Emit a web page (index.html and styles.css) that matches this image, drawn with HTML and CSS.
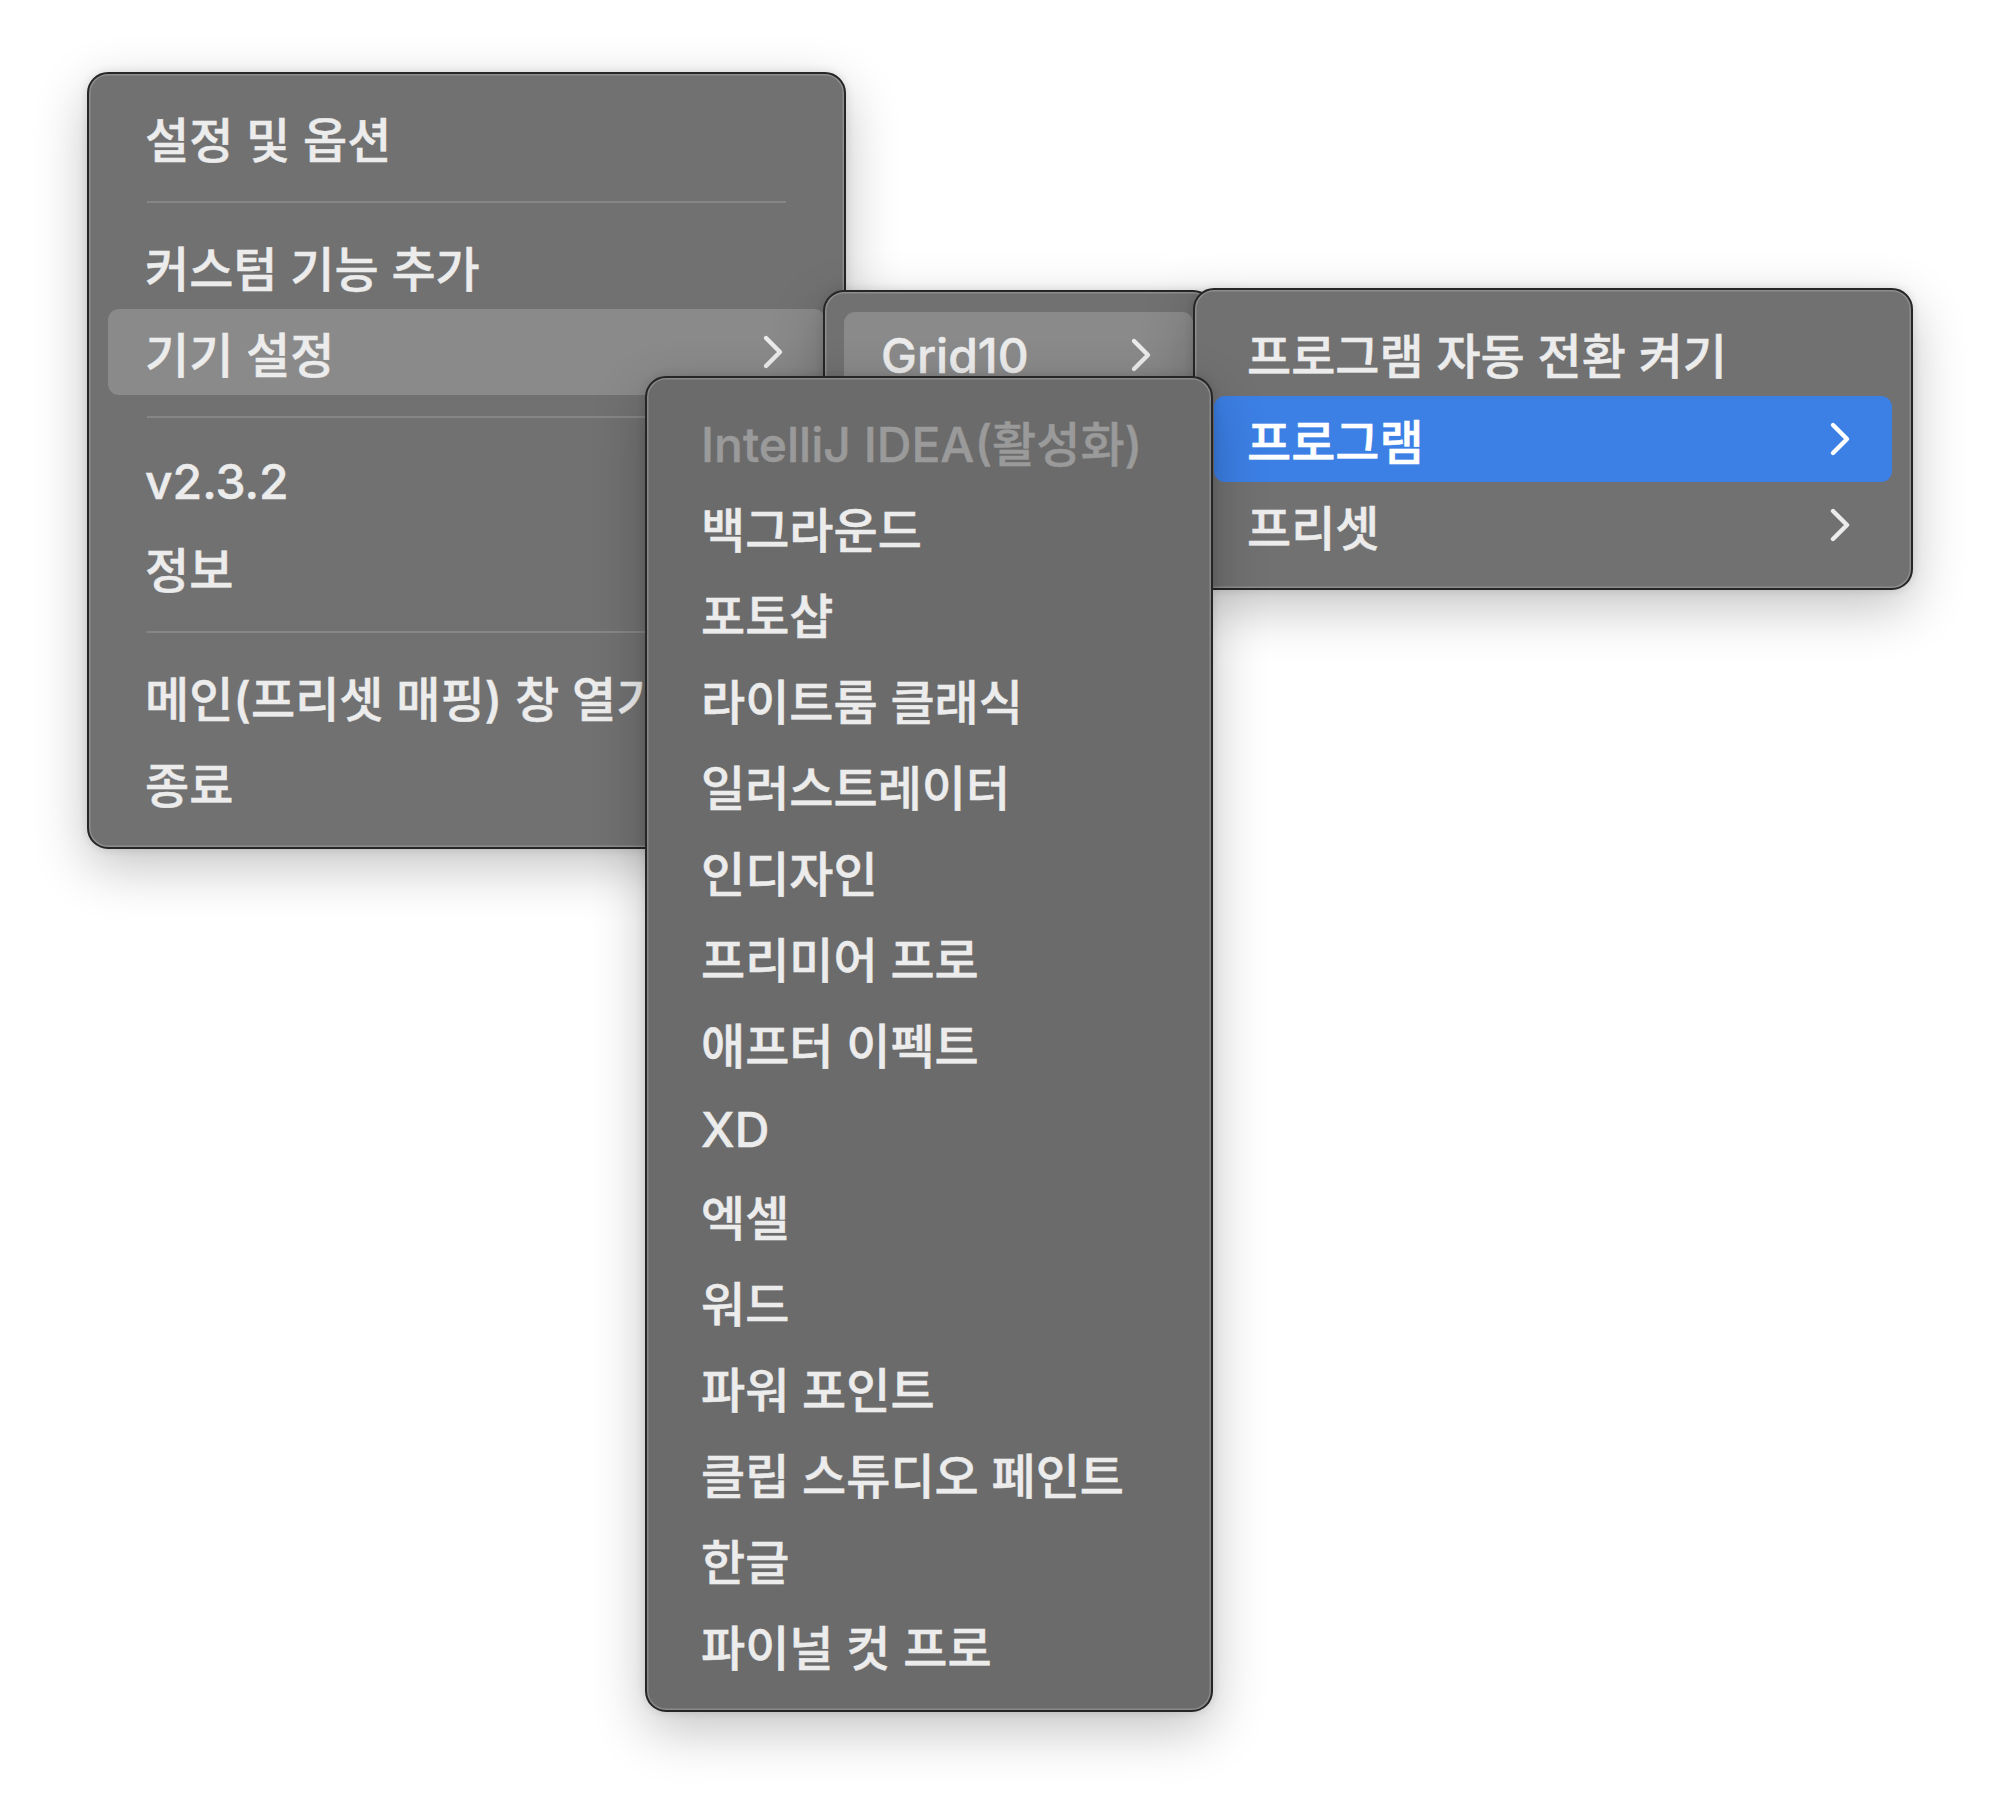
FILE: index.html
```html
<!DOCTYPE html>
<html lang="ko">
<head>
<meta charset="utf-8">
<title>Menu</title>
<link rel="stylesheet" href="styles.css">
</head>
<body>
<div class="desk">
  <div class="menu menu-main">
    <div class="item">설정 및 옵션</div>
    <div class="sep"></div>
    <div class="item">커스텀 기능 추가</div>
    <div class="item hover">기기 설정<svg class="chev" viewBox="0 0 22 36"><path d="M4 4 L18 18 L4 32"/></svg></div>
    <div class="sep"></div>
    <div class="item">v2.3.2</div>
    <div class="item">정보</div>
    <div class="sep"></div>
    <div class="item">메인(프리셋 매핑) 창 열기</div>
    <div class="item">종료</div>
  </div>

  <div class="menu menu-device">
    <div class="item hover">Grid10<svg class="chev" viewBox="0 0 22 36"><path d="M4 4 L18 18 L4 32"/></svg></div>
  </div>

  <div class="menu menu-prog">
    <div class="item">프로그램 자동 전환 켜기</div>
    <div class="item active">프로그램<svg class="chev" viewBox="0 0 22 36"><path d="M4 4 L18 18 L4 32"/></svg></div>
    <div class="item">프리셋<svg class="chev" viewBox="0 0 22 36"><path d="M4 4 L18 18 L4 32"/></svg></div>
  </div>

  <div class="menu menu-apps">
    <div class="item disabled">IntelliJ IDEA(활성화)</div>
    <div class="item">백그라운드</div>
    <div class="item">포토샵</div>
    <div class="item">라이트룸 클래식</div>
    <div class="item">일러스트레이터</div>
    <div class="item">인디자인</div>
    <div class="item">프리미어 프로</div>
    <div class="item">애프터 이펙트</div>
    <div class="item">XD</div>
    <div class="item">엑셀</div>
    <div class="item">워드</div>
    <div class="item">파워 포인트</div>
    <div class="item">클립 스튜디오 페인트</div>
    <div class="item">한글</div>
    <div class="item">파이널 컷 프로</div>
  </div>
</div>
</body>
</html>
```

FILE: styles.css
```css
html, body {
  margin: 0;
  padding: 0;
  background: #ffffff;
}

.desk {
  position: relative;
  width: 2000px;
  height: 1816px;
  overflow: hidden;
  font-family: "Inter", "Noto Sans CJK KR", sans-serif;
  font-size: 48px;
  font-weight: 500;
  color: #ececec;
  -webkit-text-stroke: 0.5px currentColor;
}

.menu {
  position: absolute;
  box-sizing: border-box;
  display: flex;
  flex-direction: column;
  background: #717171;
  border: 2px solid #262626;
  border-radius: 21px;
  padding: 20px 19px 22px;
  box-shadow: inset 0 0 0 1.5px rgba(255, 255, 255, 0.2),
              0 18px 54px rgba(0, 0, 0, 0.24),
              0 0 10px rgba(0, 0, 0, 0.12);
}

.menu-main {
  left: 87px;
  top: 72px;
  width: 759px;
  height: 777px;
}

.menu-device {
  left: 823px;
  top: 290px;
  width: 391px;
  height: 150px;
}

.menu-prog {
  left: 1193px;
  top: 288px;
  width: 720px;
  height: 302px;
}

.menu-apps {
  left: 645px;
  top: 376px;
  width: 568px;
  height: 1336px;
  background: #6b6b6b;
}

.item {
  flex: none;
  height: 86px;
  display: flex;
  align-items: center;
  justify-content: space-between;
  padding: 0 41px 0 37px;
  border-radius: 11px;
  white-space: nowrap;
}

.menu-prog .item {
  padding-left: 33px;
}

.menu-apps .item {
  padding-left: 35px;
}

.item.hover {
  background: #8a8a8a;
}

.item.active {
  background: #3c7fe5;
  color: #ffffff;
}

.item.disabled {
  color: #9a9a9a;
}

.sep {
  flex: none;
  height: 43px;
  display: flex;
  align-items: center;
  margin: 0 39px;
}

.sep::before {
  content: "";
  display: block;
  width: 100%;
  height: 2px;
  background: #868686;
}

.chev {
  width: 22px;
  height: 36px;
  flex: none;
}

.chev path {
  fill: none;
  stroke: #ececec;
  stroke-width: 4.4;
  stroke-linecap: round;
  stroke-linejoin: round;
}

.item.active .chev path {
  stroke: #ffffff;
}
```
